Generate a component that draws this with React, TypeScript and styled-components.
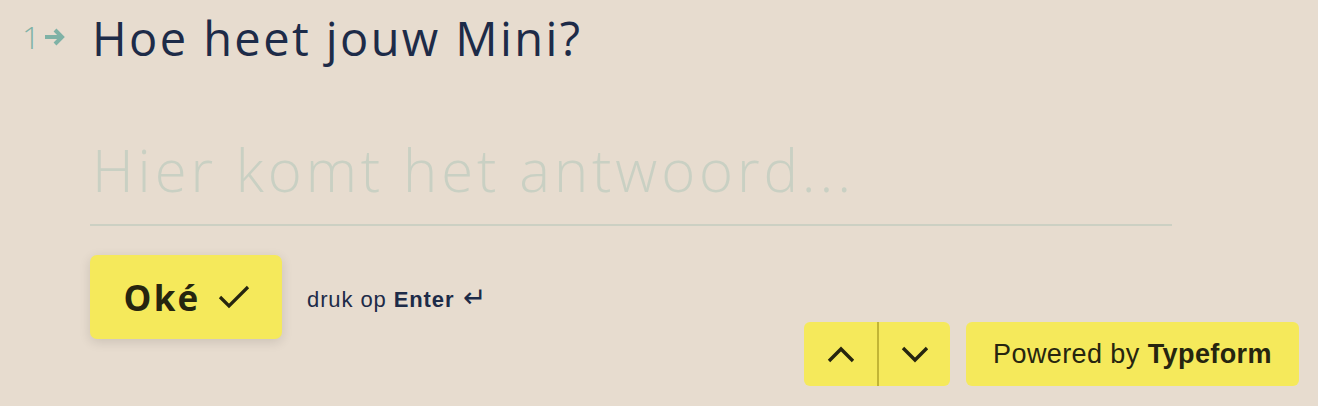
import React from "react";
import styled, { createGlobalStyle } from "styled-components";

const Global = createGlobalStyle`
  html, body { margin: 0; padding: 0; background: #e7dccf; }
  * { box-sizing: border-box; }
`;

const Page = styled.div`
  height: 406px;
  display: flex;
  flex-direction: column;
  font-family: "Open Sans", sans-serif;
  overflow: hidden;
`;

const Question = styled.div`
  display: flex;
  align-items: flex-start;
  padding: 8px 0 0 22px;
`;

const Counter = styled.div`
  width: 70px;
  height: 60px;
  display: flex;
  align-items: center;
  gap: 4px;
  color: #7fb2a6;
  font-size: 32px;
  font-weight: 300;
  line-height: 32px;
  padding-bottom: 2px;
`;

const Title = styled.h1`
  margin: 0;
  font-family: "Open Sans", sans-serif;
  font-weight: 400;
  font-size: 47px;
  line-height: 60px;
  color: #1d2b48;
  letter-spacing: 2.4px;
`;

const Body = styled.div`
  padding-left: 90px;
  width: 1172px;
`;

const Answer = styled.div`
  margin-top: 67px;
  padding: 0 0 19px 2px;
  font-size: 58px;
  font-weight: 300;
  line-height: 70px;
  color: #c9d0c3;
  border-bottom: 2px solid #ccd0c3;
  letter-spacing: 3.9px;
  white-space: nowrap;
`;

const Actions = styled.div`
  display: flex;
  align-items: center;
  gap: 25px;
  margin-top: 29px;
`;

const OkButton = styled.button`
  width: 192px;
  height: 84px;
  border: 0;
  border-radius: 7px;
  background: #f5e95b;
  box-shadow: 0 3px 12px rgba(0, 0, 0, 0.12);
  display: flex;
  align-items: center;
  justify-content: center;
  gap: 18px;
  font-family: "Open Sans", sans-serif;
  font-weight: 700;
  font-size: 35px;
  letter-spacing: 2.2px;
  color: #26250f;
  padding: 0 0 0 2px;
`;

const Hint = styled.div`
  font-family: "Liberation Sans", Arial, sans-serif;
  font-size: 22px;
  letter-spacing: 0.9px;
  color: #1d2b48;
  display: flex;
  align-items: center;
  gap: 9px;
  padding-top: 5px;
  b { font-weight: 700; }
`;

const EnterGlyph = styled.span`
  font-size: 28px;
  line-height: 22px;
  margin-top: -4px;
`;

const Footer = styled.div`
  position: fixed;
  right: 19px;
  bottom: 20px;
  display: flex;
  gap: 16px;
`;

const NavGroup = styled.div`
  display: flex;
  height: 64px;
  border-radius: 6px;
  background: #f5e95b;
  overflow: hidden;
`;

const NavButton = styled.button<{ $divider?: boolean }>`
  width: 73px;
  height: 64px;
  border: 0;
  background: transparent;
  display: flex;
  align-items: center;
  justify-content: center;
  border-left: ${(p) => (p.$divider ? "2px solid #c2b535" : "0")};
  padding: 0;
  color: #26250f;
`;

const Powered = styled.div`
  height: 64px;
  width: 333px;
  border-radius: 6px;
  background: #f5e95b;
  display: flex;
  align-items: center;
  justify-content: center;
  font-family: "Liberation Sans", Arial, sans-serif;
  font-size: 27px;
  letter-spacing: 0.4px;
  color: #26250f;
  b { font-weight: 700; margin-left: 8px; }
`;

const Chevron = ({ up }: { up?: boolean }) => (
  <svg width="28" height="18" viewBox="0 0 28 18" fill="none">
    <path
      d={up ? "M2 16 L14 4 L26 16" : "M2 3 L14 15 L26 3"}
      stroke="#26250f"
      strokeWidth="3.4"
    />
  </svg>
);

export default function App() {
  return (
    <>
      <Global />
      <Page>
        <Question>
          <Counter>
            <span>1</span>
            <svg width="22" height="18" viewBox="0 0 22 18" fill="none">
              <path d="M1 9 H18 M11 2 L18 9 L11 16" stroke="#7fb2a6" strokeWidth="4" />
            </svg>
          </Counter>
          <Title>Hoe heet jouw Mini?</Title>
        </Question>
        <Body>
          <Answer>Hier komt het antwoord...</Answer>
          <Actions>
            <OkButton>
              Oké
              <svg width="32" height="24" viewBox="0 0 32 24" fill="none">
                <path d="M2 12 L11 21 L30 2" stroke="#26250f" strokeWidth="3.2" />
              </svg>
            </OkButton>
            <Hint>
              <span>
                druk op <b>Enter</b>
              </span>
              <EnterGlyph>↵</EnterGlyph>
            </Hint>
          </Actions>
        </Body>
        <Footer>
          <NavGroup>
            <NavButton aria-label="vorige">
              <Chevron up />
            </NavButton>
            <NavButton $divider aria-label="volgende">
              <Chevron />
            </NavButton>
          </NavGroup>
          <Powered>
            Powered by<b>Typeform</b>
          </Powered>
        </Footer>
      </Page>
    </>
  );
}
